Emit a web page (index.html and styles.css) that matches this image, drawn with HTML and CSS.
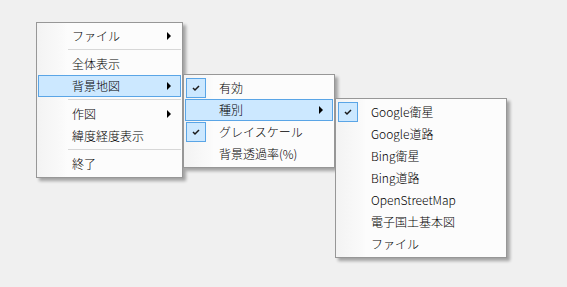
FILE: index.html
```html
<!DOCTYPE html>
<html lang="ja">
<head>
    <meta charset="UTF-8">
    <title>地図メニュー</title>
    <link rel="stylesheet" href="styles.css">
</head>
<body>

    <!-- main context menu -->
    <div class="menu menu-main">
        <div class="item has-sub"><span class="gutter"></span><span class="label">ファイル</span><span class="arrow"></span></div>
        <div class="sep"></div>
        <div class="item"><span class="gutter"></span><span class="label">全体表示</span></div>
        <div class="item has-sub active"><span class="gutter"></span><span class="label">背景地図</span><span class="arrow"></span></div>
        <div class="sep"></div>
        <div class="item has-sub"><span class="gutter"></span><span class="label">作図</span><span class="arrow"></span></div>
        <div class="item"><span class="gutter"></span><span class="label">緯度経度表示</span></div>
        <div class="sep"></div>
        <div class="item"><span class="gutter"></span><span class="label">終了</span></div>
    </div>

    <!-- 背景地図 submenu -->
    <div class="menu menu-bg">
        <div class="item checked"><span class="gutter"><span class="check"></span></span><span class="label">有効</span></div>
        <div class="item has-sub active"><span class="gutter"></span><span class="label">種別</span><span class="arrow"></span></div>
        <div class="item checked"><span class="gutter"><span class="check"></span></span><span class="label">グレイスケール</span></div>
        <div class="item"><span class="gutter"></span><span class="label">背景透過率(%)</span></div>
    </div>

    <!-- 種別 submenu -->
    <div class="menu menu-kind">
        <div class="item checked"><span class="gutter"><span class="check"></span></span><span class="label">Google衛星</span></div>
        <div class="item"><span class="gutter"></span><span class="label">Google道路</span></div>
        <div class="item"><span class="gutter"></span><span class="label">Bing衛星</span></div>
        <div class="item"><span class="gutter"></span><span class="label">Bing道路</span></div>
        <div class="item"><span class="gutter"></span><span class="label">OpenStreetMap</span></div>
        <div class="item"><span class="gutter"></span><span class="label">電子国土基本図</span></div>
        <div class="item"><span class="gutter"></span><span class="label">ファイル</span></div>
    </div>

    <script>
        // draw the check marks
        document.querySelectorAll('.check').forEach(box => {
            box.innerHTML = '<svg width="20" height="20" viewBox="0 0 20 20"><polyline points="7,10 9,12 13,8" fill="none" stroke="#1a1a1a" stroke-width="1.5"/></svg>';
        });
    </script>

</body>
</html>
```

FILE: styles.css
```css
body {
    margin: 0;
    padding: 0;
    background-color: #f0f0f0;
    font-family: "Noto Sans CJK JP", "Noto Sans", sans-serif;
    font-size: 12px;
    font-weight: 300;
    color: #000;
    width: 567px;
    height: 287px;
    overflow: hidden;
    position: relative;
}
.menu {
    position: absolute;
    box-sizing: border-box;
    padding: 2px 1px;
    border: 1px solid #979797;
    background: linear-gradient(to right, #f3f3f3 0, #fafafa 26px, #fcfcfc 30px);
    box-shadow: 3px 3px 3px rgba(0, 0, 0, 0.32);
}
.menu-main {
    left: 36px;
    top: 22px;
    width: 147px;
}
.menu-bg {
    left: 183px;
    top: 74px;
    width: 152px;
}
.menu-kind {
    left: 335px;
    top: 98px;
    width: 172px;
}
.item {
    display: flex;
    align-items: center;
    height: 22px;
    box-sizing: border-box;
    border: 1px solid transparent;
    white-space: nowrap;
}
.item.active {
    background-color: #cce8ff;
    border-color: #5aa5e6;
}
.gutter {
    width: 21px;
    height: 20px;
    flex: none;
}
.check {
    display: block;
    width: 20px;
    height: 20px;
    box-sizing: border-box;
    border: 1px solid #5aa5e6;
    background-color: #cce8ff;
}
.check svg {
    display: block;
    margin: -1px;
}
.label {
    flex: 1;
    padding-left: 12px;
    line-height: 20px;
}
.arrow {
    width: 0;
    height: 0;
    border-top: 4px solid transparent;
    border-bottom: 4px solid transparent;
    border-left: 4px solid #000;
    margin-right: 9px;
}
.sep {
    height: 6px;
    box-sizing: border-box;
    margin-left: 30px;
    padding-top: 2px;
}
.sep::after {
    content: '';
    display: block;
    height: 1px;
    background-color: #d7d7d7;
}
```
